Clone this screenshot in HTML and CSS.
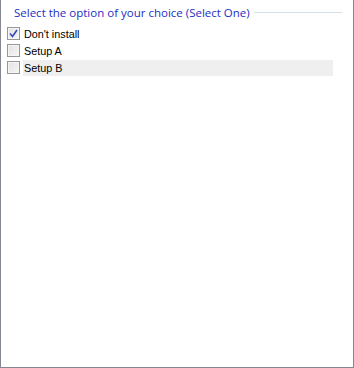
FILE: index.html
```html
<!DOCTYPE html>
<html>
<head>
<meta charset="utf-8">
<link rel="stylesheet" href="styles.css">
</head>
<body>
<div class="panel">
  <div class="group-head">
    <span class="group-title">Select the option of your choice (Select One)</span>
    <span class="group-line"></span>
  </div>
  <ul class="options">
    <li class="option">
      <span class="box checked">
        <svg viewBox="0 0 9 9" width="9" height="9"><path d="M1 4.5 L3.5 7.5 L8 1" fill="none" stroke="#3446b8" stroke-width="1.6"/></svg>
      </span>
      <span class="label">Don't install</span>
    </li>
    <li class="option">
      <span class="box"></span>
      <span class="label">Setup A</span>
    </li>
    <li class="option hover">
      <span class="box"></span>
      <span class="label">Setup B</span>
    </li>
  </ul>
</div>
</body>
</html>
```
FILE: styles.css
```css
html, body {
  margin: 0;
  padding: 0;
  background: #fff;
}
.panel {
  box-sizing: border-box;
  width: 354px;
  height: 368px;
  border: 1px solid #828790;
  border-top: none;
  font-family: "Liberation Sans", Arial, sans-serif;
}
.group-head {
  display: flex;
  align-items: center;
  padding: 4px 11px 0 13px;
  height: 16px;
}
.group-title {
  color: #1c2fc4;
  white-space: nowrap;
  font-family: "Open Sans", "Noto Sans", sans-serif;
  font-size: 11.5px;
}
.group-line {
  flex: 1;
  height: 1px;
  background: #d5dfe5;
  margin-left: 4px;
}
.options {
  list-style: none;
  margin: 0;
  padding: 5px 0 0 6px;
}
.option {
  display: flex;
  align-items: center;
  height: 17px;
  color: #000;
  font-size: 10.8px;
}
.box {
  box-sizing: border-box;
  width: 13px;
  height: 13px;
  border: 1px solid #979797;
  background: linear-gradient(135deg, #e2e2e2, #f6f6f6);
  box-shadow: inset 0 0 0 1px #f6f6f6;
  display: flex;
  align-items: center;
  justify-content: center;
  flex: none;
}
.label {
  margin-left: 3px;
  padding-left: 1px;
  line-height: 16px;
  flex: 1;
  margin-right: 20px;
}
.option.hover .label {
  background: #efefef;
}
```
